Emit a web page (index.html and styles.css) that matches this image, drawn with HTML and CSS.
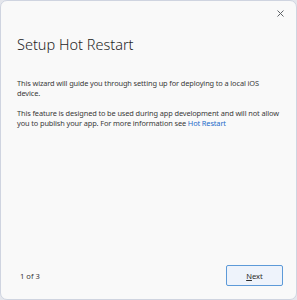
FILE: index.html
```html
<!DOCTYPE html>
<html lang="en">
<head>
    <meta charset="UTF-8">
    <title>Setup Hot Restart</title>
    <link rel="stylesheet" href="styles.css">
</head>
<body>
    <div class="window">
        <div class="titlebar">
            <button class="close" aria-label="Close">
                <svg width="7" height="7" viewBox="0 0 7 7">
                    <path d="M0.5 0.5 L6.5 6.5 M6.5 0.5 L0.5 6.5" stroke="#5f6368" stroke-width="1" fill="none"/>
                </svg>
            </button>
        </div>
        <main class="content">
            <h1>Setup Hot Restart</h1>
            <p>This wizard will guide you through setting up for deploying to a local iOS device.</p>
            <p>This feature is designed to be used during app development and will not allow you to publish your app. For more information see <a href="#">Hot Restart</a></p>
        </main>
        <div class="footer">
            <span class="step">1 of 3</span>
            <button class="next"><u>N</u>ext</button>
        </div>
    </div>
</body>
</html>
```

FILE: styles.css
```css
html{
    background:#e4e6ec;
}
body{
    margin:0;
    font-family:"Noto Sans","Open Sans",sans-serif;
    color:#1b1b1b;
}
.window{
    box-sizing:border-box;
    width:297px;
    height:300px;
    background:#f9f9f9;
    border:1px solid #cfd4e0;
    border-radius:7px;
    display:flex;
    flex-direction:column;
}
.titlebar{
    display:flex;
    justify-content:flex-end;
    padding:6px 8px 0 0;
}
.close{
    width:16px;
    height:12px;
    padding:0;
    border:none;
    background:none;
    display:flex;
    align-items:center;
    justify-content:center;
}
.content{
    flex:1;
    padding:0 16px;
}
h1{
    margin:15px 0 0;
    font-size:14.5px;
    font-weight:300;
    line-height:20px;
    color:#1f1f1f;
}
p{
    margin:0;
    font-size:7.4px;
    line-height:10px;
    letter-spacing:-0.12px;
    color:#3a3a3a;
}
h1 + p{
    margin-top:24px;
}
p + p{
    margin-top:10px;
}
a{
    color:#1b6ac9;
    text-decoration:none;
}
.footer{
    display:flex;
    justify-content:space-between;
    align-items:center;
    padding:0 13px 13px 19px;
}
.step{
    font-size:7.6px;
    color:#3a3a3a;
}
.next{
    width:57px;
    height:21px;
    border:1px solid #5d9ad8;
    border-radius:2px;
    background:#eef3fb;
    font-family:inherit;
    font-size:7.6px;
    color:#2a2a2a;
    padding:0;
}
```
